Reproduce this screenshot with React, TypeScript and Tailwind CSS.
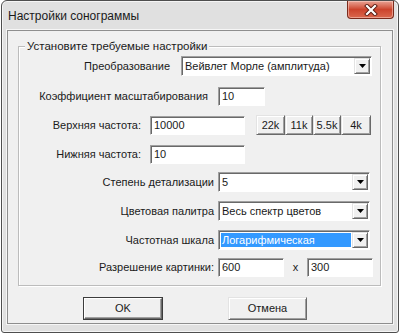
import React from "react";

function Field({ w, value }: { w: string; value: string }) {
  return (
    <div
      className={`${w} h-[19px] flex items-center pl-[3px] bg-white border border-t-[#a0a0a0] border-l-[#a0a0a0] border-r-white border-b-white shadow-[inset_1px_1px_0_#696969] overflow-hidden whitespace-nowrap`}
    >
      {value}
    </div>
  );
}

function Arrow() {
  return (
    <svg width="7" height="4" viewBox="0 0 7 4">
      <path d="M0 0H7L3.5 4Z" fill="#000" />
    </svg>
  );
}

function Combo({ w, value, selected }: { w: string; value: string; selected?: boolean }) {
  return (
    <div
      className={`${w} h-[20px] flex bg-white border border-t-[#a0a0a0] border-l-[#a0a0a0] border-r-white border-b-white shadow-[inset_1px_1px_0_#696969] pt-[1px] pl-[1px] pr-[1px] pb-[1px]`}
    >
      <div className="flex-1 flex items-center p-[1px] overflow-hidden whitespace-nowrap">
        {selected ? (
          <div className="w-full h-full flex items-center pl-[1px] bg-[#3399ff] text-white">{value}</div>
        ) : (
          <div className="pl-[1px]">{value}</div>
        )}
      </div>
      <div className="w-[16px] flex items-center justify-center bg-[#f0f0f0] border border-t-[#e3e3e3] border-l-[#e3e3e3] border-r-[#696969] border-b-[#696969] shadow-[inset_1px_1px_0_white,inset_-1px_-1px_0_#a0a0a0]">
        <Arrow />
      </div>
    </div>
  );
}

function SmallBtn({ w, label }: { w: string; label: string }) {
  return (
    <div
      className={`${w} h-[20px] flex items-center justify-center bg-[#f0f0f0] border border-t-[#e3e3e3] border-l-[#e3e3e3] border-r-[#696969] border-b-[#696969] shadow-[inset_1px_1px_0_white,inset_-1px_-1px_0_#a0a0a0]`}
    >
      {label}
    </div>
  );
}

export default function App() {
  return (
    <div className="w-[400px] h-[333px] bg-white font-['Liberation_Sans',Arial,sans-serif] text-[11px] text-[#1a1a1a]">
      <div className="ml-[1px] w-[398px] h-[333px] flex flex-col bg-[#e0e0e0] border border-[#4e4e4e] rounded-t-[6px] rounded-b-[3px] shadow-[inset_0_0_0_1px_#f5f5f5]">
        {/* title bar */}
        <div className="h-[29px] flex items-start justify-between">
          <div className="pl-[6px] pt-[8px] text-[12px] leading-[15px] text-[#1a1a1a]">Настройки сонограммы</div>
          <div className="mr-[4px] w-[47px] h-[18px] flex items-center justify-center rounded-b-[4px] border border-t-0 border-[#7a2a1c] bg-gradient-to-b from-[#e8a294] via-[#cc432c] to-[#da674d] shadow-[inset_0_0_0_1px_rgba(255,220,210,0.5)]">
            <svg width="14" height="12" viewBox="0 0 14 12">
              <path d="M3 2L11 10M11 2L3 10" stroke="#5a1a10" strokeWidth="4" strokeLinecap="square" />
              <path d="M3 2L11 10M11 2L3 10" stroke="#ffffff" strokeWidth="2.2" strokeLinecap="square" />
            </svg>
          </div>
        </div>
        {/* client area */}
        <div className="ml-[5px] w-[386px] h-[294px] flex flex-col bg-[#f0f0f0] border border-[#8e8e8e] shadow-[0_0_0_1px_#f6f6f6]">
          <div className="mt-[15px] ml-[10px] w-[363px] h-[240px] flex flex-col border border-[#bcbcbc] shadow-[inset_1px_1px_0_white,1px_1px_0_white]">
            <div className="-mt-[8px] ml-[6px] w-fit px-[2px] h-[14px] leading-[14px] bg-[#f0f0f0] text-[11.5px]">Установите требуемые настройки</div>

            <div className="mt-[3px] h-[20px] flex items-center">
              <div className="w-[151px] text-right">Преобразование</div>
              <div className="ml-[11px]">
                <Combo w="w-[191px]" value="Вейвлет Морле (амплитуда)" />
              </div>
            </div>

            <div className="mt-[10px] h-[20px] flex items-center">
              <div className="w-[189px] text-right whitespace-nowrap">Коэффициент масштабирования</div>
              <div className="ml-[10px]">
                <Field w="w-[47px]" value="10" />
              </div>
            </div>

            <div className="mt-[9px] h-[20px] flex items-center">
              <div className="w-[122px] text-right whitespace-nowrap">Верхняя частота:</div>
              <div className="ml-[9px]">
                <Field w="w-[95px]" value="10000" />
              </div>
              <div className="ml-[11px] flex">
                <SmallBtn w="w-[29px]" label="22k" />
                <SmallBtn w="w-[28px]" label="11k" />
                <SmallBtn w="w-[28px]" label="5.5k" />
                <SmallBtn w="w-[30px]" label="4k" />
              </div>
            </div>

            <div className="mt-[9px] h-[20px] flex items-center">
              <div className="w-[122px] text-right whitespace-nowrap">Нижняя частота:</div>
              <div className="ml-[9px]">
                <Field w="w-[95px]" value="10" />
              </div>
            </div>

            <div className="mt-[8px] h-[20px] flex items-center">
              <div className="w-[195px] text-right whitespace-nowrap">Степень детализации</div>
              <div className="ml-[4px]">
                <Combo w="w-[152px]" value="5" />
              </div>
            </div>

            <div className="mt-[9px] h-[20px] flex items-center">
              <div className="w-[195px] text-right whitespace-nowrap">Цветовая палитра</div>
              <div className="ml-[4px]">
                <Combo w="w-[152px]" value="Весь спектр цветов" />
              </div>
            </div>

            <div className="mt-[9px] h-[20px] flex items-center">
              <div className="w-[195px] text-right whitespace-nowrap">Частотная шкала</div>
              <div className="ml-[4px]">
                <Combo w="w-[152px]" value="Логарифмическая" selected />
              </div>
            </div>

            <div className="mt-[7px] h-[20px] flex items-center">
              <div className="w-[195px] text-right whitespace-nowrap">Разрешение картинки:</div>
              <div className="ml-[4px]">
                <Field w="w-[66px]" value="600" />
              </div>
              <div className="w-[23px] text-center">x</div>
              <Field w="w-[66px]" value="300" />
            </div>
          </div>

          <div className="mt-[11px] flex">
            <div className="ml-[75px] w-[80px] h-[23px] border border-[#3c3c3c]">
              <div className="w-full h-full flex items-center justify-center bg-[#f0f0f0] border border-t-white border-l-white border-r-[#696969] border-b-[#696969] shadow-[inset_-1px_-1px_0_#a0a0a0]">
                OK
              </div>
            </div>
            <div className="ml-[65px] w-[79px] h-[23px] flex items-center justify-center bg-[#f0f0f0] border border-t-[#e3e3e3] border-l-[#e3e3e3] border-r-[#696969] border-b-[#696969] shadow-[inset_1px_1px_0_white,inset_-1px_-1px_0_#a0a0a0]">
              Отмена
            </div>
          </div>
        </div>
      </div>
    </div>
  );
}
